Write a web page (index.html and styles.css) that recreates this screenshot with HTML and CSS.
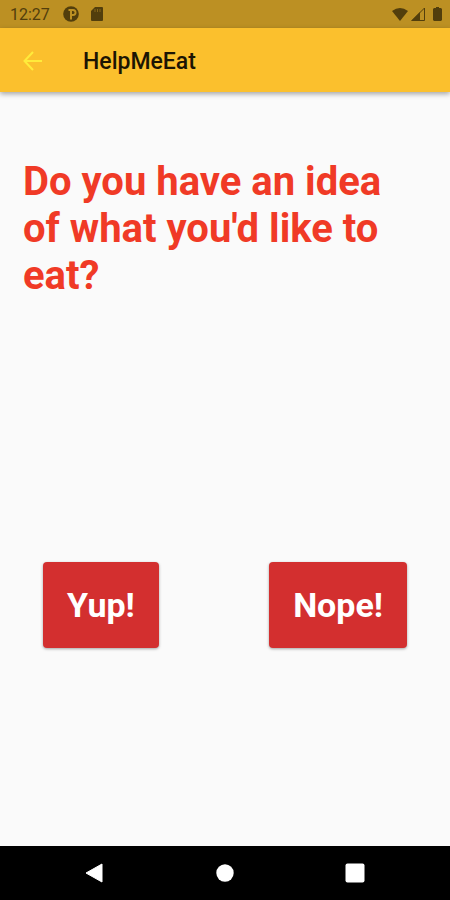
FILE: index.html
```
<!DOCTYPE html>
<html lang="en">
<head>
  <meta charset="UTF-8">
  <title>HelpMeEat</title>
  <meta name="viewport" content="width=device-width, initial-scale=1.0">
  <link rel="stylesheet" href="styles.css">
</head>
<body>
  <div class="status-bar">
    <span class="time">12:27</span>
    <svg class="app-icon" width="16" height="16" viewBox="0 0 16 16">
      <circle cx="8" cy="8" r="7.800" fill="currentColor"/>
      <path d="M5.500 3H10a3.300 3.300 0 0 1 0 7H9v3.500H7V5H5.500z" fill="#bc9023"/>
      <path d="M9 5h1a1.500 1.500 0 0 1 0 3H9z" fill="currentColor"/>
    </svg>
    <svg width="12" height="14" viewBox="0 0 12 14">
      <path d="M4 0h7a1 1 0 0 1 1 1v12a1 1 0 0 1-1 1H1a1 1 0 0 1-1-1V4z" fill="currentColor"/>
      <path d="M4 2v3M6.500 2v3M9 2v3" stroke="#bc9023" stroke-opacity="0.500"/>
    </svg>
    <div class="signals">
      <svg width="16" height="13" viewBox="0 0 16 13">
        <path d="M0 3Q8-3 16 3L8 13z" fill="currentColor"/>
      </svg>
      <svg width="14" height="14" viewBox="0 0 14 14">
        <path d="M1 13.500L13.500 1v12.500z" fill="none" stroke="currentColor"/>
        <path d="M0 14l9-9v9z" fill="currentColor"/>
      </svg>
      <svg class="battery" width="9" height="14" viewBox="0 0 9 14">
        <path d="M3 0h3v1h2l1 1v11l-1 1H1l-1-1V2l1-1h2z" fill="currentColor"/>
      </svg>
    </div>
  </div>

  <header class="app-bar">
    <button class="back" aria-label="Back">
      <svg width="20" height="20" viewBox="0 0 20 20">
        <path d="M19 10H2M10 1L1.500 10L10 19" fill="none" stroke="currentColor" stroke-width="2"/>
      </svg>
    </button>
    <h1>HelpMeEat</h1>
  </header>

  <main>
    <h2>Do you have an idea of what you'd like to eat?</h2>
    <div class="answers">
      <button class="answer">Yup!</button>
      <button class="answer">Nope!</button>
    </div>
  </main>

  <nav class="nav-bar">
    <button aria-label="Back">
      <svg width="20" height="20" viewBox="0 0 20 20">
        <path d="M17 1v18L1 10z" fill="currentColor" stroke="currentColor" stroke-linejoin="round"/>
      </svg>
    </button>
    <button aria-label="Home">
      <svg width="20" height="20" viewBox="0 0 20 20">
        <circle cx="10" cy="10" r="8.700" fill="currentColor"/>
      </svg>
    </button>
    <button aria-label="Recent apps">
      <svg width="20" height="20" viewBox="0 0 20 20">
        <rect x="0.500" y="0.500" width="19" height="19" rx="2" fill="currentColor"/>
      </svg>
    </button>
  </nav>
</body>
</html>
```
FILE: styles.css
```
body {
  margin: 0;
  min-height: 100vh;
  display: flex;
  flex-direction: column;
  font-family: Roboto, sans-serif;
  background-color: #fafafa;
}
svg {
  display: block;
}
button {
  padding: 0;
  border: none;
  background: none;
  font-family: inherit;
  cursor: pointer;
}
.status-bar {
  display: flex;
  align-items: center;
  height: 28px;
  padding: 0 8px 0 10px;
  background-color: #bc9023;
  color: #523e0c;
}
.time {
  font-size: 16px;
}
.app-icon {
  margin: 0 12px 0 13px;
}
.signals {
  display: flex;
  align-items: center;
  gap: 3px;
  margin-left: auto;
}
.battery {
  margin-left: 5px;
}
.app-bar {
  display: flex;
  align-items: center;
  height: 62px;
  padding: 2px 23px 0;
  background-color: #fbc02d;
  box-shadow: 0 2px 5px rgba(0, 0, 0, 0.35);
}
.back {
  color: #ffeb3b;
}
h1 {
  margin: 0 0 0 40px;
  font-size: 23px;
  font-weight: 500;
  color: #1c1503;
}
main {
  flex: 1;
  display: flex;
  flex-direction: column;
  justify-content: space-between;
  padding: 66px 23px 198px;
}
h2 {
  margin: 0;
  font-size: 40px;
  line-height: 47px;
  font-weight: 700;
  color: #f03a26;
}
.answers {
  display: flex;
  justify-content: space-between;
  padding: 0 20px;
}
.answer {
  padding: 22px 24px;
  border-radius: 4px;
  background-color: #d32f2f;
  box-shadow: 0 1px 3px rgba(0, 0, 0, 0.35);
  font-size: 34px;
  line-height: 42px;
  font-weight: 700;
  color: #fff;
}
.nav-bar {
  display: flex;
  align-items: center;
  justify-content: space-between;
  height: 54px;
  padding: 0 85px;
  background-color: #000;
}
.nav-bar button {
  color: #fff;
}
```
